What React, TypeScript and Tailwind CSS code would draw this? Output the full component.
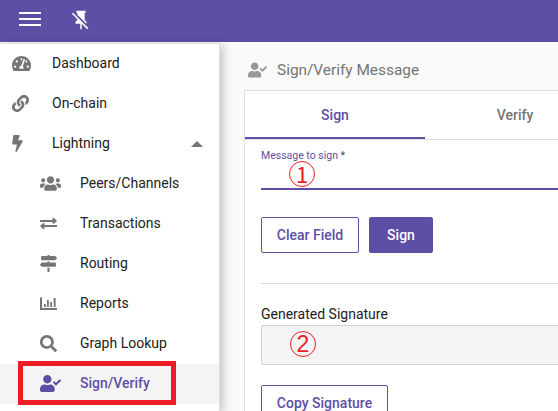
import type { ReactNode } from 'react';
import {
  FaBolt,
  FaLink,
  FaMapSigns,
  FaSearch,
  FaTachometerAlt,
  FaUserCheck,
  FaUsers,
} from 'react-icons/fa';

interface NavItem {
  label: string;
  icon: ReactNode;
  child?: boolean;
  active?: boolean;
  expanded?: boolean;
}

function ExchangeIcon() {
  return (
    <svg width="17" height="13" viewBox="0 0 17 13" fill="currentColor">
      <path d="M0 3h12.500V1.200Q12.700.2 13.600.7L16.600 3.500Q17 4 16.600 4.500L13.600 6.800Q12.700 7 12.500 6.200V5H0zM17 8v2H4.500v1.600Q4.300 12.700 3.400 12.200L.4 9.500Q0 9 .4 8.500L3.400 6Q4.300 5.700 4.500 6.500V8z" />
    </svg>
  );
}

function ChartIcon() {
  return (
    <svg width="17" height="13" viewBox="0 0 17 13" fill="currentColor">
      <path d="M0 .5h2V11h15v2H0z" />
      <path d="M4 7h1.800v3H4zM7 3h1.800v7H7zM10.200 5H12v5h-1.800zM13.700 1h1.900v9h-1.900z" />
    </svg>
  );
}

function PinOffIcon() {
  return (
    <svg width="22" height="22" viewBox="0 0 24 24" fill="currentColor">
      <path d="M2,5.27L3.28,4L20,20.72L18.73,22L12.8,16.07V22H11.2V16H6V14L8,12V11.27L2,5.27M16,12L18,14V16H17.82L8,6.18V4H7V2H17V4H16V12Z" />
    </svg>
  );
}

const items: NavItem[] = [
  { label: 'Dashboard', icon: <FaTachometerAlt className="h-[17px] w-[19px]" /> },
  { label: 'On-chain', icon: <FaLink className="h-[17px] w-[17px]" /> },
  { label: 'Lightning', icon: <FaBolt className="h-[17px] w-[11px]" />, expanded: true },
  { label: 'Peers/Channels', icon: <FaUsers className="h-[17px] w-[21px]" />, child: true },
  { label: 'Transactions', icon: <ExchangeIcon />, child: true },
  { label: 'Routing', icon: <FaMapSigns className="h-[17px] w-[17px]" />, child: true },
  { label: 'Reports', icon: <ChartIcon />, child: true },
  { label: 'Graph Lookup', icon: <FaSearch className="h-[17px] w-[17px]" />, child: true },
  { label: 'Sign/Verify', icon: <FaUserCheck className="h-[17px] w-[21px]" />, child: true, active: true },
];

function NavRow({ item }: { item: NavItem }) {
  return (
    <div
      className={`relative flex h-10 items-center ${item.child ? 'pl-10' : 'pl-3'} ${
        item.active ? 'bg-[#f4f4f4] font-medium text-[#5e4ea5]' : 'text-[#212121]'
      }`}
    >
      <span className={`flex w-10 shrink-0 pb-0.5 ${item.active ? '' : 'text-[#757575]'}`}>{item.icon}</span>
      <span className="pb-0.5">{item.label}</span>
      {item.expanded && (
        <svg className="mr-4 ml-auto" width="12" height="6" viewBox="0 0 12 6" fill="#757575">
          <path d="M0 6L6 0l6 6z" />
        </svg>
      )}
      {item.active && (
        <div className="absolute -top-[3px] left-[18px] h-11 w-[158px] border-[5px] border-[#ee1c24]" />
      )}
    </div>
  );
}

function Marker({ value, className }: { value: string; className: string }) {
  return (
    <div
      className={`absolute flex size-[26px] items-center justify-center rounded-full border border-[#ee1c24] leading-none text-[#ee1c24] ${className}`}
    >
      {value}
    </div>
  );
}

export default function App() {
  return (
    <div className="flex h-[411px] w-[558px] flex-col overflow-hidden bg-[#fafafa] font-['Roboto',sans-serif] text-sm">
      <header className="flex h-[42px] shrink-0 items-center bg-[#5e4ea5] pb-1 text-white">
        <div className="ml-[19px] flex h-[14px] w-[22px] flex-col justify-between">
          <div className="h-0.5 bg-white" />
          <div className="h-0.5 bg-white" />
          <div className="h-0.5 bg-white" />
        </div>
        <div className="mt-px ml-[29px]">
          <PinOffIcon />
        </div>
      </header>
      <div className="flex min-h-0 flex-1 border-t border-white">
        <nav className="z-10 w-[220px] shrink-0 border-t border-r border-[#dcdcdc] bg-white shadow-[3px_2px_10px_rgba(0,0,0,0.22)]">
          {items.map((item) => (
            <NavRow key={item.label} item={item} />
          ))}
        </nav>
        <main className="flex min-w-0 flex-1 flex-col pl-6">
          <div className="flex h-[47px] shrink-0 items-center pt-2 pl-1 text-[#757575]">
            <FaUserCheck className="mb-0.5 h-4 w-[19px] text-[#999]" />
            <h1 className="mb-0.5 ml-[10px] text-[15.4px]">Sign/Verify Message</h1>
          </div>
          <section className="w-[720px] flex-1 border-t border-l border-[#dedede] bg-white">
            <div className="flex h-[49px] border-b border-[#dedede] font-medium">
              <div className="-mb-px flex h-12 w-[180px] items-center justify-center border-b-2 border-[#5e4ea5] pt-0.5 text-[#5e4ea5]">
                Sign
              </div>
              <div className="flex h-12 w-[180px] items-center justify-center text-[#757575]">Verify</div>
            </div>
            <div className="pl-4">
              <div className="relative h-[50px] border-b-2 border-[#5e4ea5] pt-2 text-[10.5px] leading-4 text-[#5e4ea5]">
                Message to sign <span className="text-[#444]">*</span>
                <Marker value="1" className="top-[21px] left-7 pb-[3px] font-['Noto_Sans_CJK_JP',sans-serif] text-[22px]" />
              </div>
              <div className="mt-[27px] flex gap-[10px] font-medium">
                <button className="h-9 w-[98px] rounded-xs border border-[#5e4ea5] text-[#5e4ea5]">Clear Field</button>
                <button className="h-9 w-16 rounded-xs bg-[#5e4ea5] text-white">Sign</button>
              </div>
              <div className="mt-[30px] border-t border-[#dedede]" />
              <div className="mt-5 text-[#212121]">Generated Signature</div>
              <div className="relative mt-px h-10 rounded-xs border border-[#d2d2d2] bg-[#f4f4f4]">
                <Marker value="2" className="top-[5px] left-7 font-['Liberation_Sans',sans-serif] text-[23px]" />
              </div>
              <button className="mt-5 h-9 w-[127px] rounded-xs border border-[#5e4ea5] font-medium text-[#5e4ea5]">
                Copy Signature
              </button>
            </div>
          </section>
        </main>
      </div>
    </div>
  );
}
